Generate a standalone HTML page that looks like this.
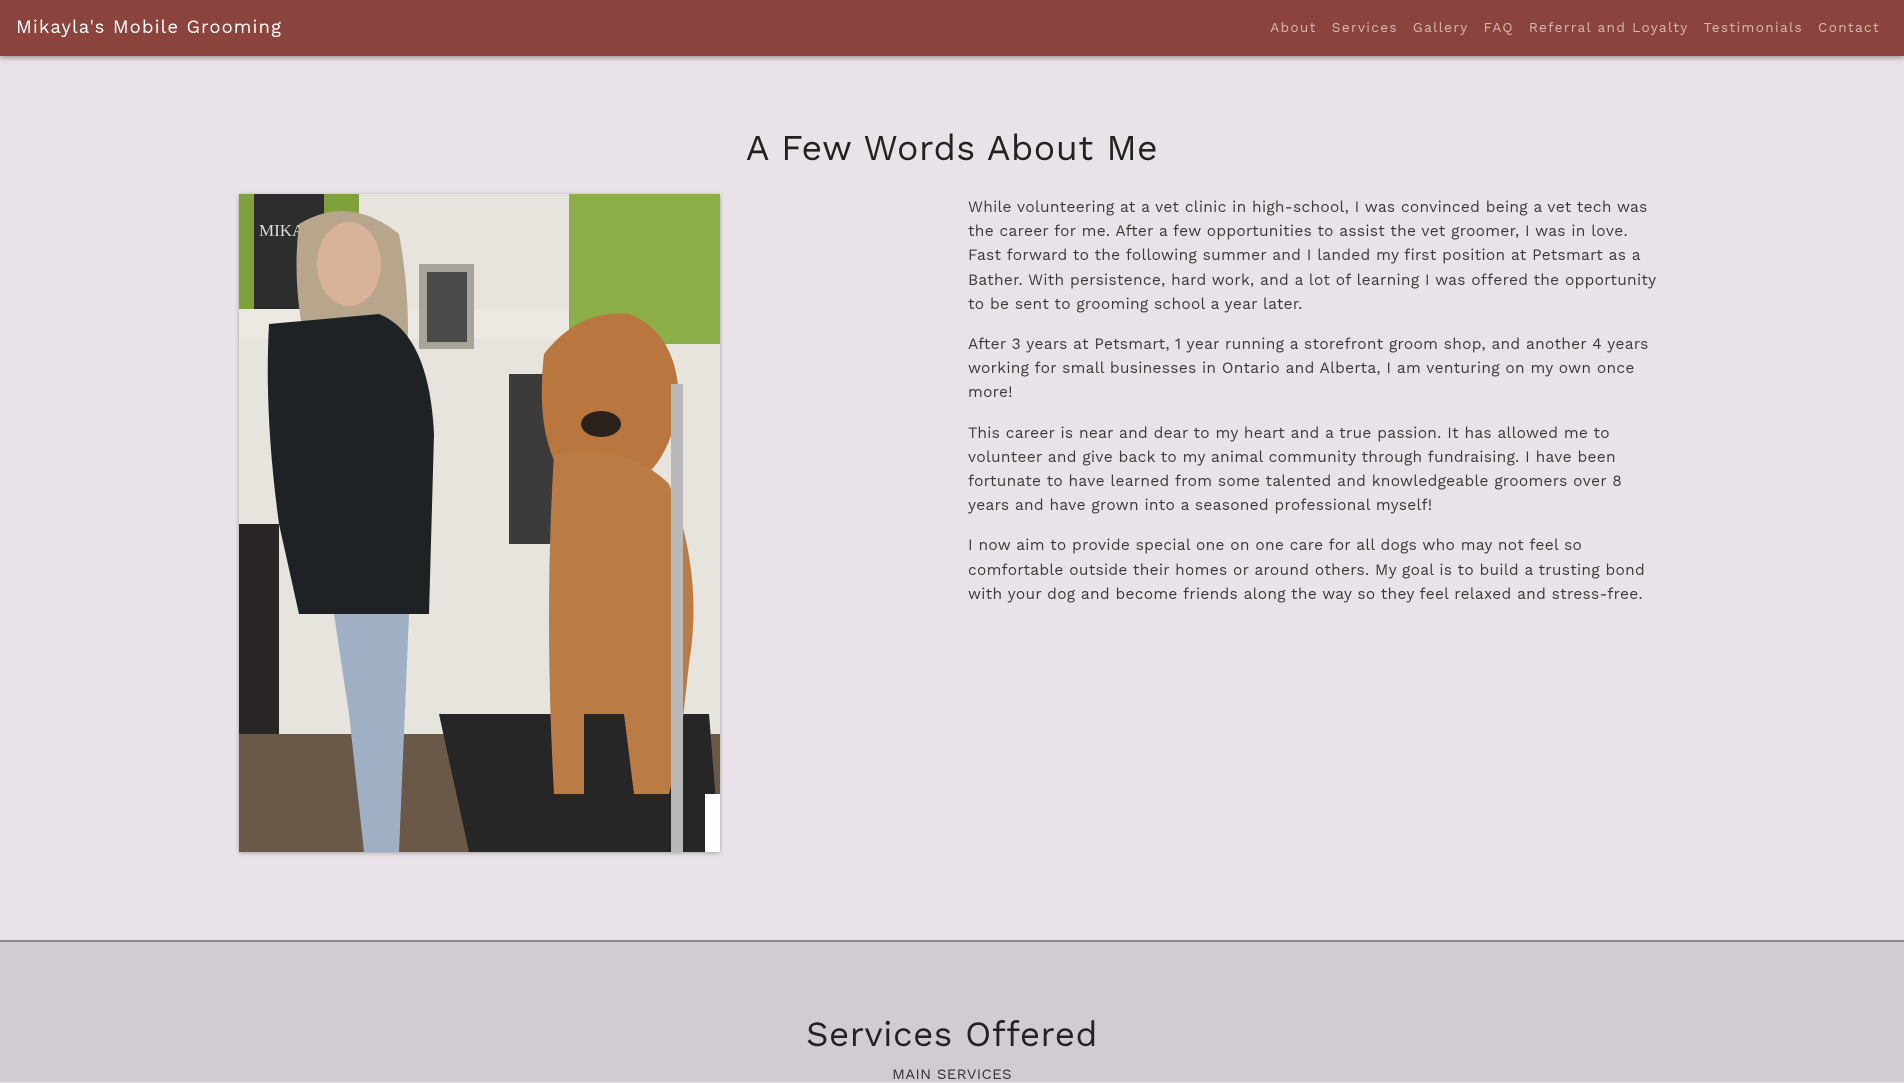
<!DOCTYPE html>
<html><head><meta charset="utf-8"><style>
*{margin:0;padding:0;box-sizing:border-box}
body{width:1904px;height:1082px;overflow:hidden;background:#e9e3e9;font-family:"Work Sans","Liberation Sans",sans-serif;color:#333}
.nav{position:absolute;left:0;top:0;width:1904px;height:56px;background:#8b443d;box-shadow:0 2px 5px rgba(0,0,0,.35);z-index:2}
.brand{position:absolute;left:16px;top:17px;color:#fff;font-size:18.5px;letter-spacing:1.1px}
.links{position:absolute;right:24px;top:20px;font-size:13.6px;letter-spacing:1.35px;color:#d8b7b3}
.links span{margin-left:15px}
h2{position:absolute;width:1904px;text-align:center;font-weight:400;font-size:35.7px;color:#222;letter-spacing:.5px}
.photo{position:absolute;left:239px;top:194px;width:481px;height:658px;box-shadow:0 1px 4px rgba(0,0,0,.3)}
.txt{position:absolute;left:968px;top:195px;width:696px;font-size:15.5px;line-height:24.2px;color:#3a3a3a;letter-spacing:.3px}
.txt p{margin-bottom:16px}
.sec2{position:absolute;left:0;top:940px;width:1904px;height:142px;background:#d2cbd3;border-top:2px solid #888}
.sub{position:absolute;width:1904px;text-align:center;top:1065px;font-size:15px;color:#333;letter-spacing:.3px}
</style></head><body>
<div class="nav"><div class="brand">Mikayla's Mobile Grooming</div>
<div class="links"><span>About</span><span>Services</span><span>Gallery</span><span>FAQ</span><span>Referral and Loyalty</span><span>Testimonials</span><span>Contact</span></div></div>
<h2 style="top:127px">A Few Words About Me</h2>
<svg class="photo" viewBox="0 0 481 658" preserveAspectRatio="none">
<rect width="481" height="658" fill="#e6e4dc"/>
<rect x="0" y="0" width="120" height="115" fill="#7fa03a"/>
<rect x="15" y="0" width="70" height="115" fill="#2d2d2d"/>
<text x="20" y="42" font-size="17" fill="#ddd" font-family="Liberation Serif,serif">MIKAYLA</text>
<rect x="330" y="0" width="151" height="150" fill="#8cae48"/>
<rect x="0" y="115" width="330" height="30" fill="#ece9e2"/>
<rect x="180" y="70" width="55" height="85" fill="#a9a49a"/><rect x="188" y="78" width="40" height="70" fill="#4a4a48"/>
<rect x="270" y="180" width="60" height="170" fill="#3b3b3b"/>
<rect x="0" y="330" width="40" height="328" fill="#2a2626"/>
<rect x="0" y="540" width="481" height="118" fill="#6a5848"/>
<polygon points="200,520 470,520 481,658 230,658" fill="#262626"/>
<path d="M60,30 Q110,0 160,40 Q175,120 165,200 L80,200 Q50,110 60,30Z" fill="#b7a58c"/>
<path d="M30,130 L140,120 Q190,140 195,240 L190,420 L60,420 L40,330 Q25,220 30,130Z" fill="#1f2225"/>
<ellipse cx="110" cy="70" rx="32" ry="42" fill="#d8b39a"/>
<path d="M95,420 L170,420 L160,658 L125,658 L110,520Z" fill="#9fb0c4"/>
<path d="M305,160 Q340,115 390,120 Q440,140 440,210 Q430,270 395,290 L330,290 Q295,250 305,160Z" fill="#b9773f"/>
<path d="M315,260 Q390,250 430,290 Q465,380 450,470 L440,560 L430,600 L395,600 L385,520 L345,520 L345,600 L315,600 Q305,420 315,260Z" fill="#bb7b44"/>
<ellipse cx="362" cy="230" rx="20" ry="13" fill="#2b221c"/>
<rect x="432" y="190" width="12" height="468" fill="#b9b9b9"/>
<rect x="466" y="600" width="15" height="58" fill="#fff"/>
</svg>
<div class="txt">
<p>While volunteering at a vet clinic in high-school, I was convinced being a vet tech was the career for me. After a few opportunities to assist the vet groomer, I was in love. Fast forward to the following summer and I landed my first position at Petsmart as a Bather. With persistence, hard work, and a lot of learning I was offered the opportunity to be sent to grooming school a year later.</p>
<p>After 3 years at Petsmart, 1 year running a storefront groom shop, and another 4 years working for small businesses in Ontario and Alberta, I am venturing on my own once more!</p>
<p>This career is near and dear to my heart and a true passion. It has allowed me to volunteer and give back to my animal community through fundraising. I have been fortunate to have learned from some talented and knowledgeable groomers over 8 years and have grown into a seasoned professional myself!</p>
<p>I now aim to provide special one on one care for all dogs who may not feel so comfortable outside their homes or around others. My goal is to build a trusting bond with your dog and become friends along the way so they feel relaxed and stress-free.</p>
</div>
<div class="sec2"></div>
<h2 style="top:1013px;font-size:35px">Services Offered</h2>
<div class="sub">MAIN SERVICES</div>
</body></html>
